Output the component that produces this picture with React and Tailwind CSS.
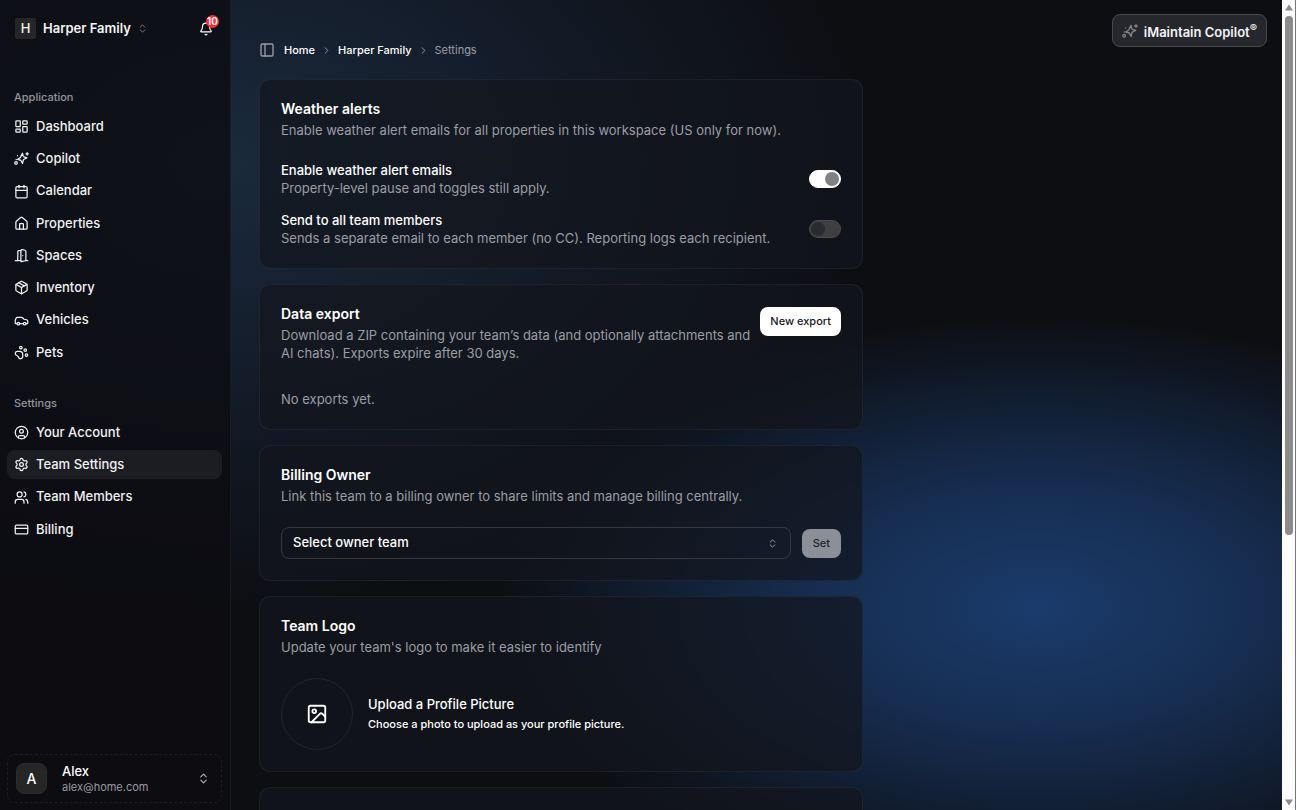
import React, { useState } from 'react';
import {
    Bell,
    Calendar,
    Car,
    ChevronRight,
    ChevronsUpDown,
    CircleUser,
    CreditCard,
    DoorOpen,
    House,
    Image,
    LayoutDashboard,
    Package,
    PanelLeft,
    Settings,
    Users
} from 'lucide-react';

const SparklesIcon = ({ className }) => (
    <svg viewBox="0 0 24 24" fill="none" stroke="currentColor" strokeWidth="2" strokeLinecap="round" strokeLinejoin="round" className={className}>
        <path d="M13.500 3.500l1.200 4.700a2 2 0 0 0 1.300 1.300l4.500 1.500-4.500 2.200a2 2 0 0 0-1.100 1.300l-1.300 5.500-2.300-4.400a2 2 0 0 0-1.300-1L5.500 13.500l4.200-2.700a2 2 0 0 0 .9-1.400z" />
        <path d="M21 2.500v4M19 4.500h4" />
        <path d="M5.500 7.500v.100" />
        <circle cx="3.200" cy="19" r="2" />
        <path d="M3.500 13.500v.100" />
    </svg>
);

const PetsIcon = ({ className }) => (
    <svg viewBox="0 0 24 24" fill="none" stroke="currentColor" strokeWidth="2" strokeLinecap="round" strokeLinejoin="round" className={className}>
        <circle cx="11" cy="4" r="2" />
        <circle cx="18" cy="8" r="2" />
        <circle cx="20" cy="16" r="2" />
        <path d="M9 10a5 5 0 0 1 5 5v3.500a3.500 3.500 0 0 1-6.840 1.045Q6.520 17.480 4.460 16.840A3.500 3.500 0 0 1 5.500 10Z" />
    </svg>
);

const appLinks = [
    { label: 'Dashboard', icon: LayoutDashboard },
    { label: 'Copilot', icon: SparklesIcon },
    { label: 'Calendar', icon: Calendar },
    { label: 'Properties', icon: House },
    { label: 'Spaces', icon: DoorOpen },
    { label: 'Inventory', icon: Package },
    { label: 'Vehicles', icon: Car },
    { label: 'Pets', icon: PetsIcon }
];

const settingsLinks = [
    { label: 'Your Account', icon: CircleUser },
    { label: 'Team Settings', icon: Settings, active: true },
    { label: 'Team Members', icon: Users },
    { label: 'Billing', icon: CreditCard }
];

const NavGroup = ({ title, links, className }) => (
    <div className="pl-[7px] pr-2">
        <p className="px-[7px] h-[29px] flex items-center text-[11px] font-medium text-[#94949b]">{title}</p>
        <ul className={`flex flex-col justify-between ${className}`}>
            {links.map(({ label, icon: Icon, active }) => (
                <li key={label}>
                    <a
                        href="#"
                        aria-current={active ? 'page' : undefined}
                        className={`flex items-center gap-[7px] h-[29px] px-[7px] rounded-lg text-[13px] font-medium text-[#f1f1f3] ${active ? 'bg-[#1c1d22]' : ''}`}
                    >
                        <Icon className="size-[15px] shrink-0" />
                        {label}
                    </a>
                </li>
            ))}
        </ul>
    </div>
);

const Sidebar = () => (
    <aside className="w-[231px] shrink-0 flex flex-col border-r border-white/5 bg-[#0c0d12]/80">
        <div className="flex items-center justify-between px-[15px] pt-[18px]">
            <button className="flex items-center gap-[7px] text-[13px] font-semibold text-[#f4f4f5]">
                <span className="size-[21px] rounded-xs bg-[#262626] flex items-center justify-center font-medium">H</span>
                Harper Family
                <ChevronsUpDown className="size-[11px] -ml-px text-[#85858b]" />
            </button>
            <button aria-label="Notifications" className="relative size-4 text-white">
                <Bell className="size-[14px]" />
                <span className="absolute -top-[6px] left-[7px] size-[13px] rounded-full bg-[#fb2c36] text-[10px] font-semibold flex items-center justify-center">
                    10
                </span>
            </button>
        </div>

        <nav className="pt-11 flex flex-col gap-[22px]">
            <NavGroup title="Application" links={appLinks} className="h-[255px]" />
            <NavGroup title="Settings" links={settingsLinks} className="h-[126px]" />
        </nav>

        <button className="mt-auto ml-[7px] mr-2 mb-[7px] h-[49px] px-2 flex items-center rounded-lg border border-dashed border-[#1c1d22] text-left">
            <span className="size-[31px] rounded-lg bg-[#262626] border border-[#2b2b2c] flex items-center justify-center text-sm font-medium text-white">A</span>
            <span className="flex-1 pl-[15px] flex flex-col">
                <span className="text-[13px] leading-4 font-medium text-white">Alex</span>
                <span className="text-[11px] leading-4 text-[#9a9aa1]">alex@home.com</span>
            </span>
            <ChevronsUpDown className="size-[13px] mr-[3px] text-[#b4b4b9]" />
        </button>
    </aside>
);

const Card = ({ title, description, action, children }) => (
    <section className="rounded-[11px] border border-white/5 bg-[#13151c]/70 px-[21px] pt-5 pb-[21px]">
        <div className="flex items-start gap-1">
            <div className="flex-1">
                <h2 className="text-sm leading-[18px] font-semibold text-white">{title}</h2>
                <p className="pt-[3px] text-[13px] leading-[18px] text-[#9c9da5]">{description}</p>
            </div>
            {action}
        </div>
        {children}
    </section>
);

const ToggleRow = ({ id, label, hint, checked, onChange }) => (
    <div className="flex items-center justify-between">
        <div>
            <label htmlFor={id} className="block text-[13px] leading-[18px] font-medium text-white">{label}</label>
            <p className="text-[13px] leading-[18px] text-[#9c9da5]">{hint}</p>
        </div>
        <input
            id={id}
            type="checkbox"
            role="switch"
            checked={checked}
            onChange={onChange}
            className="appearance-none w-8 h-[18px] p-px flex items-center shrink-0 rounded-full border border-[#4b4b4b] bg-[#3f3f3f] checked:border-white checked:bg-white before:size-[14px] before:rounded-full before:bg-[#2a2b30] checked:before:ml-auto checked:before:bg-[#808086]"
        />
    </div>
);

const ScrollRail = () => (
    <div aria-hidden="true" className="w-[14px] shrink-0 flex flex-col items-center bg-[#fcfcfc] border-r border-[#77777a] py-1">
        <svg viewBox="0 0 8 7" className="w-2 h-[7px] fill-[#8b8b8b]"><path d="M4 0.500L8 6.500H0z" /></svg>
        <div className="flex-1 w-full flex justify-center py-[5px]">
            <div className="w-2 h-2/3 rounded-full bg-[#8b8b8b]" />
        </div>
        <svg viewBox="0 0 8 7" className="w-2 h-[7px] fill-[#8b8b8b]"><path d="M4 6.500L8 0.500H0z" /></svg>
    </div>
);

export default function App() {
    const [alerts, setAlerts] = useState(true);
    const [sendAll, setSendAll] = useState(false);

    return (
        <div className="h-screen flex overflow-hidden font-['Inter',sans-serif] text-white bg-[#0d0e12]">
            <div className="relative flex-1 min-w-0 flex bg-[radial-gradient(ellipse_42%_36%_at_81%_75%,#1a3b6c_0%,#162d50_42%,#101a2a_78%,transparent_100%),radial-gradient(ellipse_50%_55%_at_18%_20%,#1a2a3b_0%,#141d2b_45%,transparent_100%)]">
                <Sidebar />

                <main className="flex-1 min-w-0 overflow-hidden px-7 pt-[42px]">
                    <nav aria-label="Breadcrumb" className="h-4 flex items-center gap-[6px] text-[11px] font-medium">
                        <button aria-label="Toggle sidebar" className="mr-[3px]">
                            <PanelLeft className="size-4 text-[#9c9da5]" />
                        </button>
                        <a href="#">Home</a>
                        <ChevronRight className="size-[11px] text-[#9c9da5]" />
                        <a href="#">Harper Family</a>
                        <ChevronRight className="size-[11px] text-[#9c9da5]" />
                        <span className="font-normal text-[#9c9da5]">Settings</span>
                    </nav>

                    <div className="pt-[21px] max-w-[604px] flex flex-col gap-[15px]">
                        <Card
                            title="Weather alerts"
                            description="Enable weather alert emails for all properties in this workspace (US only for now)."
                        >
                            <div className="pt-[22px] flex flex-col gap-[14px]">
                                <ToggleRow
                                    id="alerts"
                                    label="Enable weather alert emails"
                                    hint="Property-level pause and toggles still apply."
                                    checked={alerts}
                                    onChange={() => setAlerts(!alerts)}
                                />
                                <ToggleRow
                                    id="send-all"
                                    label="Send to all team members"
                                    hint="Sends a separate email to each member (no CC). Reporting logs each recipient."
                                    checked={sendAll}
                                    onChange={() => setSendAll(!sendAll)}
                                />
                            </div>
                        </Card>

                        <Card
                            title="Data export"
                            description="Download a ZIP containing your team’s data (and optionally attachments and AI chats). Exports expire after 30 days."
                            action={
                                <button className="mt-[2px] h-[29px] px-[10px] rounded-lg bg-white text-[11px] font-medium text-[#18181b] whitespace-nowrap">
                                    New export
                                </button>
                            }
                        >
                            <p className="pt-7 text-[13px] leading-[18px] text-[#9c9da5]">No exports yet.</p>
                        </Card>

                        <Card
                            title="Billing Owner"
                            description="Link this team to a billing owner to share limits and manage billing centrally."
                        >
                            <div className="pt-[22px] flex items-center gap-[11px]">
                                <div className="relative flex-1">
                                    <select
                                        aria-label="Owner team"
                                        className="appearance-none w-full h-8 px-[11px] rounded-lg border border-[#37383c] bg-transparent text-[13px] font-medium text-white"
                                    >
                                        <option>Select owner team</option>
                                    </select>
                                    <ChevronsUpDown className="absolute right-[13px] top-[11px] size-[11px] text-[#a5a6ab] pointer-events-none" />
                                </div>
                                <button disabled className="h-[29px] px-[11px] rounded-lg bg-[#8b8f98] text-[11px] font-medium text-[#20242e]">
                                    Set
                                </button>
                            </div>
                        </Card>

                        <Card
                            title="Team Logo"
                            description="Update your team's logo to make it easier to identify"
                        >
                            <div className="pt-[22px] flex items-center gap-[15px]">
                                <button aria-label="Upload picture" className="size-[72px] rounded-full border border-white/7 flex items-center justify-center">
                                    <Image className="size-[22px]" />
                                </button>
                                <div>
                                    <p className="text-[13px] leading-5 font-medium">Upload a Profile Picture</p>
                                    <p className="text-[11px] leading-5 font-medium">Choose a photo to upload as your profile picture.</p>
                                </div>
                            </div>
                        </Card>

                        <section className="h-36 rounded-[11px] border border-white/5 bg-[#13151c]/70" />
                    </div>
                </main>

                <button className="absolute top-[14px] right-[15px] h-[33px] px-[9px] flex items-center gap-[6px] rounded-lg border border-[#48494e] bg-[#26272c] text-[13px] font-semibold text-[#f4f4f5]">
                    <SparklesIcon className="size-4 text-[#85868b]" />
                    <span className="pt-[5px]">
                        iMaintain Copilot<sup className="text-[11px]">®</sup>
                    </span>
                </button>
            </div>
            <ScrollRail />
        </div>
    );
}
